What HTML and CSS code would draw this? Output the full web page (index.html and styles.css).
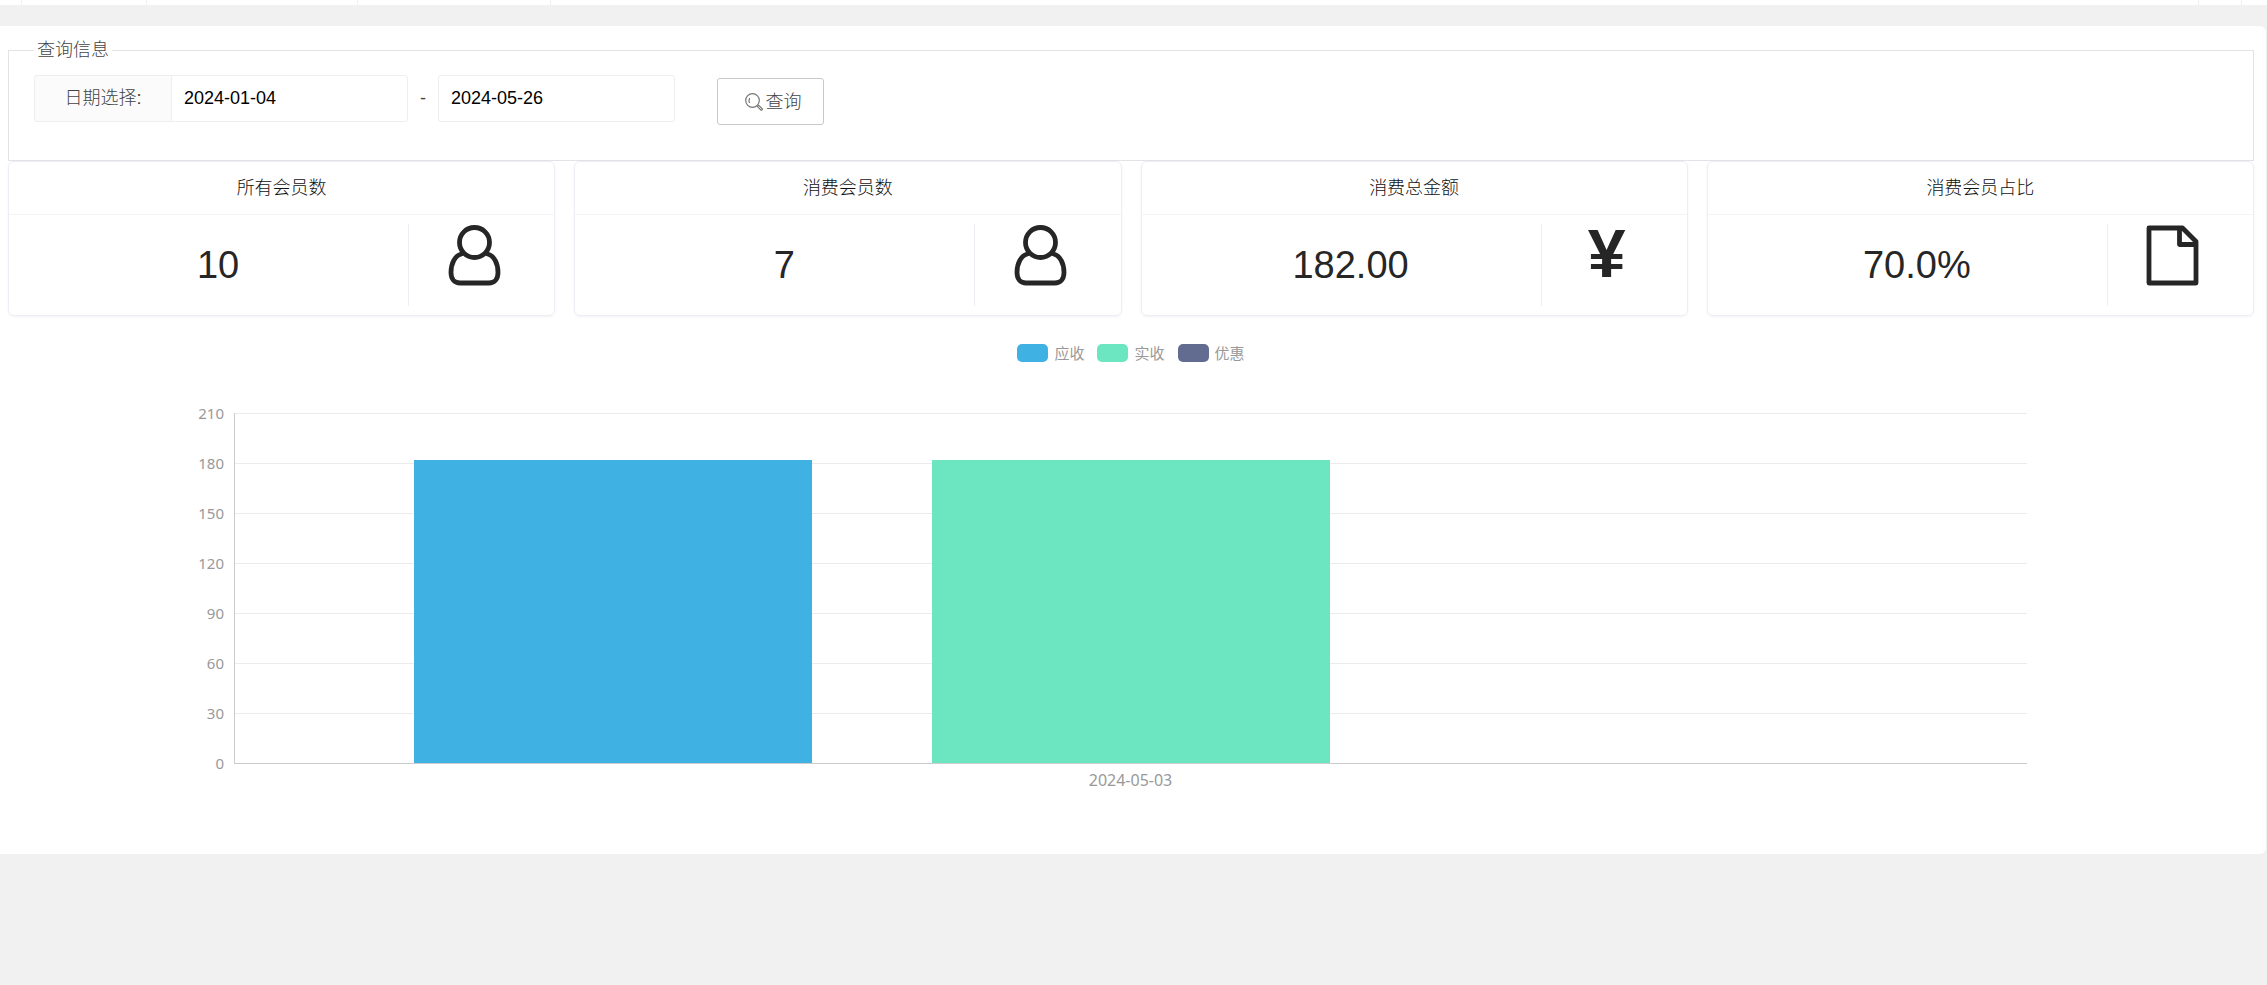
FILE: index.html
```
<!DOCTYPE html>
<html lang="zh-CN">
<head>
<meta charset="utf-8">
<title>会员消费统计</title>
<link rel="stylesheet" href="styles.css">
</head>
<body>
<div class="tabs">
  <span class="tab tab-toggle"></span>
  <span class="tab tab-home"></span>
  <span class="tab tab-wide"></span>
  <span class="tab tab-mid"></span>
  <span class="tab-space"></span>
  <span class="tab tab-tool"></span>
  <span class="tab-end"></span>
</div>
<main class="panel">
  <form>
    <fieldset class="query">
      <legend>查询信息</legend>
      <div class="query-row">
        <label class="query-label" for="start">日期选择:</label>
        <input class="query-input" id="start" type="text" value="2024-01-04">
        <span class="query-dash">-</span>
        <input class="query-input query-input-end" type="text" value="2024-05-26" aria-label="结束日期">
        <button class="query-button" type="button">
          <svg class="search-icon" viewBox="0 0 18 18" aria-hidden="true">
            <circle cx="7.5" cy="7.5" r="6.8"/>
            <path d="M4.600 4.900Q3.400 7.400 4.600 10"/>
            <path d="M12.400 13.600l1.300-1.300 3.600 3.500q.3 1.200-1.300 1.400z"/>
          </svg>
          查询
        </button>
      </div>
    </fieldset>
  </form>

  <section class="cards">
    <article class="card">
      <h2 class="card-title">所有会员数</h2>
      <div class="card-body">
        <div class="card-value">10</div>
        <div class="card-icon">
          <svg class="icon" viewBox="0 0 53 61" aria-hidden="true">
            <circle cx="26.5" cy="17.5" r="15"/>
            <path d="M15 28.500C6.500 30 3 39 3 47.500C3 54.500 7 58 12 58H41C46 58 50 54.500 50 47.500C50 39 46.500 30 38 28.500"/>
          </svg>
        </div>
      </div>
    </article>
    <article class="card">
      <h2 class="card-title">消费会员数</h2>
      <div class="card-body">
        <div class="card-value">7</div>
        <div class="card-icon">
          <svg class="icon" viewBox="0 0 53 61" aria-hidden="true">
            <circle cx="26.5" cy="17.5" r="15"/>
            <path d="M15 28.500C6.500 30 3 39 3 47.500C3 54.500 7 58 12 58H41C46 58 50 54.500 50 47.500C50 39 46.500 30 38 28.500"/>
          </svg>
        </div>
      </div>
    </article>
    <article class="card">
      <h2 class="card-title">消费总金额</h2>
      <div class="card-body">
        <div class="card-value">182.00</div>
        <div class="card-icon"><span class="yen">¥</span></div>
      </div>
    </article>
    <article class="card">
      <h2 class="card-title">消费会员占比</h2>
      <div class="card-body">
        <div class="card-value">70.0%</div>
        <div class="card-icon">
          <svg class="icon" viewBox="0 0 53 61" aria-hidden="true">
            <path d="M3 3H36.500L50 16.500V58H3Z"/>
            <path d="M33.500 3V19.500H50"/>
          </svg>
        </div>
      </div>
    </article>
  </section>

  <section class="chart">
    <ul class="legend">
      <li class="legend-item"><span class="swatch due"></span>应收</li>
      <li class="legend-item"><span class="swatch paid"></span>实收</li>
      <li class="legend-item"><span class="swatch discount"></span>优惠</li>
    </ul>
    <div class="chart-grid">
      <ol class="ticks">
        <li>210</li><li>180</li><li>150</li><li>120</li><li>90</li><li>60</li><li>30</li><li>0</li>
      </ol>
      <div class="plot">
        <div class="lines"><i></i><i></i><i></i><i></i><i></i><i></i><i></i></div>
        <div class="bars">
          <div class="bar due" style="height:86.67%"></div>
          <div class="bar paid" style="height:86.67%"></div>
          <div class="bar discount" style="height:0%"></div>
        </div>
      </div>
      <div class="category">2024-05-03</div>
    </div>
  </section>
</main>
</body>
</html>
```
FILE: styles.css
```
* {
  box-sizing: border-box;
}

body {
  margin: 0;
  background: #f1f1f1;
  color: #444;
  font: 18px/26px "Liberation Sans", "Noto Sans CJK SC", sans-serif;
  font-weight: 300;
}

.tabs {
  display: flex;
  height: 5px;
  background: #fff;
}

.tab {
  border-right: 1px solid #f1f1f1;
}

.tab-toggle { width: 22px; }
.tab-home { width: 125px; }
.tab-wide { width: 211px; }
.tab-mid { width: 193px; }
.tab-space { flex: 1; border-right: 1px solid #f1f1f1; }
.tab-tool { width: 43px; }
.tab-end { width: 25px; }

.panel {
  margin: 21px 1px 0 0;
  padding: 11px 12px 64px 8px;
  background: #fff;
  border-radius: 0 6px 6px 0;
}

.query {
  margin: 0;
  padding: 0 25px 35px;
  border: 1px solid #e3e3e7;
}

.query legend {
  padding: 0 3px;
}

.query-row {
  display: flex;
  align-items: flex-start;
  padding-top: 12px;
}

.query-label {
  width: 138px;
  height: 47px;
  border: 1px solid #eee;
  border-radius: 3px 0 0 3px;
  background: #fbfbfb;
  line-height: 45px;
  text-align: center;
}

.query-input {
  width: 237px;
  height: 47px;
  margin-left: -1px;
  padding: 0 12px;
  border: 1px solid #eee;
  border-radius: 0 3px 3px 0;
  background: #fff;
  color: #000;
  font: inherit;
}

.query-input-end {
  margin-left: 0;
  border-radius: 3px;
}

.query-dash {
  width: 30px;
  line-height: 47px;
  text-align: center;
}

.query-button {
  display: flex;
  align-items: center;
  justify-content: center;
  gap: 3px;
  width: 107px;
  height: 47px;
  margin: 3px 0 0 42px;
  padding: 0 0 0 5px;
  border: 1px solid #c9c9c9;
  border-radius: 3px;
  background: #fff;
  color: inherit;
  font: inherit;
}

.search-icon {
  width: 18px;
  height: 18px;
  fill: none;
  stroke: #777;
  stroke-width: 1.2;
}

.cards {
  display: grid;
  grid-template-columns: repeat(4, 1fr);
  gap: 19px;
}

.card {
  border: 1px solid #ededf6;
  border-radius: 6px;
  box-shadow: 0 1px 3px rgba(0, 0, 40, 0.05);
}

.card-title {
  margin: 0;
  border-bottom: 1px solid #f4f4f6;
  color: #111;
  font-size: 18px;
  font-weight: 300;
  line-height: 52px;
  text-align: center;
}

.card-body {
  display: grid;
  grid-template-columns: 3fr 1fr;
  padding: 9px 18px 9px 19px;
}

.card-value {
  height: 82px;
  border-right: 1px solid #ededf4;
  color: #262626;
  font-size: 38px;
  line-height: 82px;
  text-align: center;
}

.card-icon {
  padding-top: 1px;
  padding-left: 3px;
  color: #262626;
  text-align: center;
}

.icon {
  display: block;
  width: 53px;
  height: 61px;
  margin: 0 auto;
  fill: none;
  stroke: #262626;
  stroke-width: 4.8;
  stroke-linejoin: round;
}

.yen {
  font-size: 68px;
  font-weight: 700;
  line-height: 56px;
}

.chart {
  font-family: "Noto Sans", "Noto Sans CJK SC", sans-serif;
  font-size: 15px;
  font-weight: 400;
  line-height: 20px;
  color: #999;
}

.legend,
.ticks {
  margin: 0;
  padding: 0;
  list-style: none;
}

.legend {
  display: flex;
  justify-content: center;
  gap: 13px;
  padding-top: 27px;
}

.legend-item {
  display: flex;
  align-items: center;
  gap: 6px;
}

.swatch {
  width: 31px;
  height: 18px;
  border-radius: 5px;
}

.due { background: #3fb1e3; }
.paid { background: #6be6c1; }
.discount { background: #626c91; }

.chart-grid {
  display: grid;
  grid-template-columns: 226px 1fr;
  padding: 25px 227px 0 0;
}

.ticks {
  grid-row: 1 / 3;
  padding-right: 10px;
  line-height: 50px;
  text-align: right;
}

.plot {
  display: grid;
  height: 351px;
  margin-top: 25px;
  border-left: 1px solid #ccc;
  border-bottom: 1px solid #ccc;
}

.lines,
.bars {
  grid-area: 1 / 1;
}

.lines {
  display: grid;
  grid-template-rows: repeat(7, 1fr);
}

.lines i {
  border-top: 1px solid #ebebeb;
}

.bars {
  display: flex;
  align-items: flex-end;
  justify-content: space-between;
  padding: 0 10%;
}

.bar {
  width: 27.78%;
}

.category {
  padding-top: 6px;
  font-size: 16px;
  text-align: center;
}
```
